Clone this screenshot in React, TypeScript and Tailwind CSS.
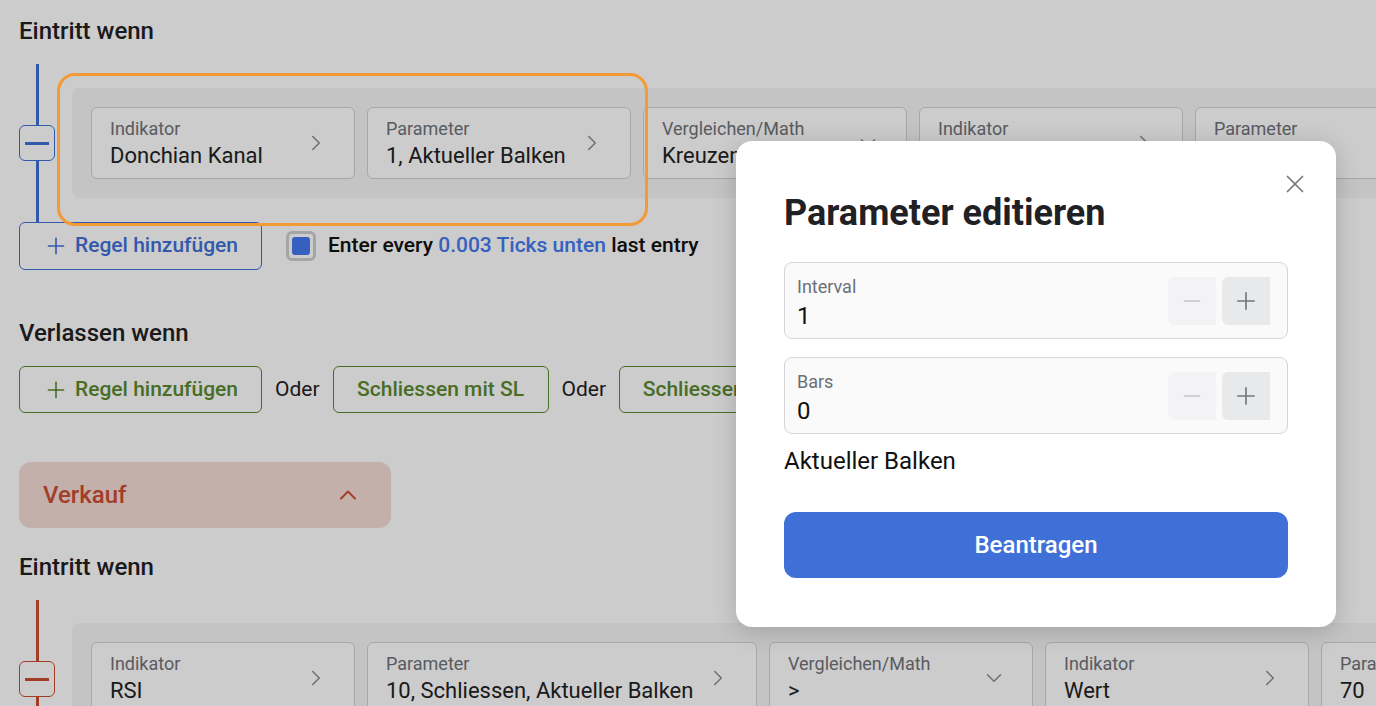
import React from "react";
import { ChevronRight, ChevronDown, ChevronUp, Plus, Minus, X } from "lucide-react";

type CardProps = { label: string; value: string; down?: boolean; wide?: boolean };

function Card({ label, value, down, wide }: CardProps) {
  return (
    <div
      className={`flex h-[72px] shrink-0 items-center justify-between rounded-md border border-[#d2d2d2] bg-white pl-[18px] pr-[25px] ${
        wide ? "w-[390px]" : "w-[264px]"
      }`}
    >
      <div className="flex flex-col whitespace-nowrap pt-[1px]">
        <span className="text-[18px] leading-[22px] text-[#6f737a]">{label}</span>
        <span className="mt-[2px] text-[22px] leading-[28px] text-[#222]">{value}</span>
      </div>
      {down ? (
        <ChevronDown size={26} strokeWidth={1.4} className="shrink-0 text-[#8a8d92]" />
      ) : (
        <ChevronRight size={26} strokeWidth={1.4} className="shrink-0 text-[#8a8d92]" />
      )}
    </div>
  );
}

function RuleRow({
  color,
  height,
  cards,
}: {
  color: "blue" | "red";
  height: string;
  cards: CardProps[];
}) {
  const line = color === "blue" ? "bg-[#3f70d7]" : "bg-[#cc4d32]";
  const btn = color === "blue" ? "border-[#3f70d7]" : "border-[#cc4d32]";
  return (
    <div className={`flex ${height}`}>
      <div className="flex w-[36px] shrink-0 flex-col items-center">
        <div className={`h-[61px] w-[3px] ${line}`} />
        <div className={`flex h-[36px] w-[36px] items-center justify-center rounded-md border ${btn} bg-white`}>
          <div className={`h-[3px] w-[24px] ${line}`} />
        </div>
        <div className={`w-[3px] flex-1 ${line}`} />
      </div>
      <div className="ml-[17px] self-start">
        <div
          className={`${
            color === "blue" ? "mt-[24px]" : "mt-[23px]"
          } flex gap-[12px] rounded-lg bg-[#f5f5f5] p-[19px] pr-[40px]`}
        >
          {cards.map((c, i) => (
            <Card key={i} {...c} />
          ))}
        </div>
      </div>
    </div>
  );
}

function Stepper({ label, value }: { label: string; value: string }) {
  return (
    <div className="flex h-[77px] items-start justify-between rounded-lg border border-[#d6d6da] bg-[#fafafa] pl-[12px] pr-[17px]">
      <div className="flex flex-col pt-[13px]">
        <span className="text-[18px] leading-[22px] text-[#6b7078]">{label}</span>
        <span className="mt-[3px] text-[24px] leading-[30px] text-[#111]">{value}</span>
      </div>
      <div className="mt-[14px] flex gap-[6px]">
        <div className="flex h-[48px] w-[48px] items-center justify-center rounded-l-md bg-[#f3f3f5]">
          <Minus size={26} strokeWidth={1.4} className="text-[#c4c5ca]" />
        </div>
        <div className="flex h-[48px] w-[48px] items-center justify-center rounded-l-md bg-[#e8e9eb]">
          <Plus size={28} strokeWidth={1.4} className="text-[#72767e]" />
        </div>
      </div>
    </div>
  );
}

export default function App() {
  return (
    <div className="relative h-[706px] w-[1376px] overflow-hidden bg-white font-['Roboto',sans-serif]">
      <div className="flex flex-col pl-[19px] pt-[15px]">
        <h2 className="text-[24px] font-medium leading-[32px] text-[#1f2124]">Eintritt wenn</h2>
        <div className="mt-[17px]">
          <RuleRow
            color="blue"
            height="h-[158px]"
            cards={[
              { label: "Indikator", value: "Donchian Kanal" },
              { label: "Parameter", value: "1, Aktueller Balken" },
              { label: "Vergleichen/Math", value: "Kreuzen über", down: true },
              { label: "Indikator", value: "Wert" },
              { label: "Parameter", value: "20" },
            ]}
          />
        </div>
        <div className="flex items-center">
          <button className="flex h-[48px] w-[243px] items-center justify-center gap-[6px] rounded-md border border-[#3f70d7] bg-white text-[21px] font-medium text-[#3f70d7]">
            <Plus size={26} strokeWidth={1.5} />
            Regel hinzufügen
          </button>
          <div className="ml-[24px] flex h-[30px] w-[30px] items-center justify-center rounded-md border-[3px] border-[#cfcfcf] bg-white">
            <div className="h-[18px] w-[18px] rounded-[3px] bg-[#4478f0]" />
          </div>
          <span className="ml-[12px] text-[21px] font-medium text-[#111]">
            Enter every <span className="text-[#4478f0]">0.003 Ticks unten</span> last entry
          </span>
        </div>

        <h2 className="mt-[47px] text-[24px] font-medium leading-[32px] text-[#1f2124]">Verlassen wenn</h2>
        <div className="mt-[17px] flex items-center gap-[13px]">
          <button className="flex h-[47px] w-[243px] shrink-0 items-center justify-center gap-[6px] rounded-md border border-[#5a8a30] bg-white text-[21px] font-medium text-[#5a8a30]">
            <Plus size={26} strokeWidth={1.5} />
            Regel hinzufügen
          </button>
          <span className="text-[21px] text-[#1f2124]">Oder</span>
          <button className="flex h-[47px] w-[216px] shrink-0 items-center justify-center rounded-md border border-[#5a8a30] bg-white text-[21px] font-medium text-[#5a8a30]">
            Schliessen mit SL
          </button>
          <span className="text-[21px] text-[#1f2124]">Oder</span>
          <button className="flex h-[47px] w-[216px] shrink-0 items-center justify-center rounded-md border border-[#5a8a30] bg-white text-[21px] font-medium text-[#5a8a30]">
            Schliessen mit TP
          </button>
        </div>

        <div className="mt-[49px] flex h-[66px] w-[372px] items-center justify-between rounded-xl bg-[#f4dcd6] pl-[24px] pr-[29px]">
          <span className="text-[24px] font-medium text-[#cc4d32]">Verkauf</span>
          <ChevronUp size={28} strokeWidth={1.6} className="text-[#cc4d32]" />
        </div>

        <h2 className="mt-[23px] text-[24px] font-medium leading-[32px] text-[#1f2124]">Eintritt wenn</h2>
        <div className="mt-[17px]">
          <RuleRow
            color="red"
            height="h-[160px]"
            cards={[
              { label: "Indikator", value: "RSI" },
              { label: "Parameter", value: "10, Schliessen, Aktueller Balken", wide: true },
              { label: "Vergleichen/Math", value: ">", down: true },
              { label: "Indikator", value: "Wert" },
              { label: "Parameter", value: "70" },
            ]}
          />
        </div>
      </div>

      {/* dim overlay */}
      <div className="absolute inset-0 bg-black/20" />

      {/* tutorial highlight */}
      <div className="absolute left-[57px] top-[73px] h-[153px] w-[591px] rounded-[18px] border-[3px] border-[#f39a37]" />

      {/* modal */}
      <div className="absolute left-[736px] top-[141px] flex h-[486px] w-[600px] flex-col rounded-2xl bg-white px-[48px] pt-[50px] shadow-[0_4px_24px_rgba(0,0,0,0.18)]">
        <button className="absolute left-[544px] top-[28px] text-[#757980]">
          <X size={30} strokeWidth={1.4} />
        </button>
        <h1 className="text-[36px] font-bold leading-[44px] text-[#1f2124]">Parameter editieren</h1>
        <div className="mt-[27px] flex flex-col gap-[18px]">
          <Stepper label="Interval" value="1" />
          <Stepper label="Bars" value="0" />
        </div>
        <div className="mt-[11px] text-[24px] leading-[32px] text-[#111]">Aktueller Balken</div>
        <button className="mt-[35px] h-[66px] w-full rounded-xl bg-[#3f70d7] text-[24px] font-medium text-white">
          Beantragen
        </button>
      </div>
    </div>
  );
}
